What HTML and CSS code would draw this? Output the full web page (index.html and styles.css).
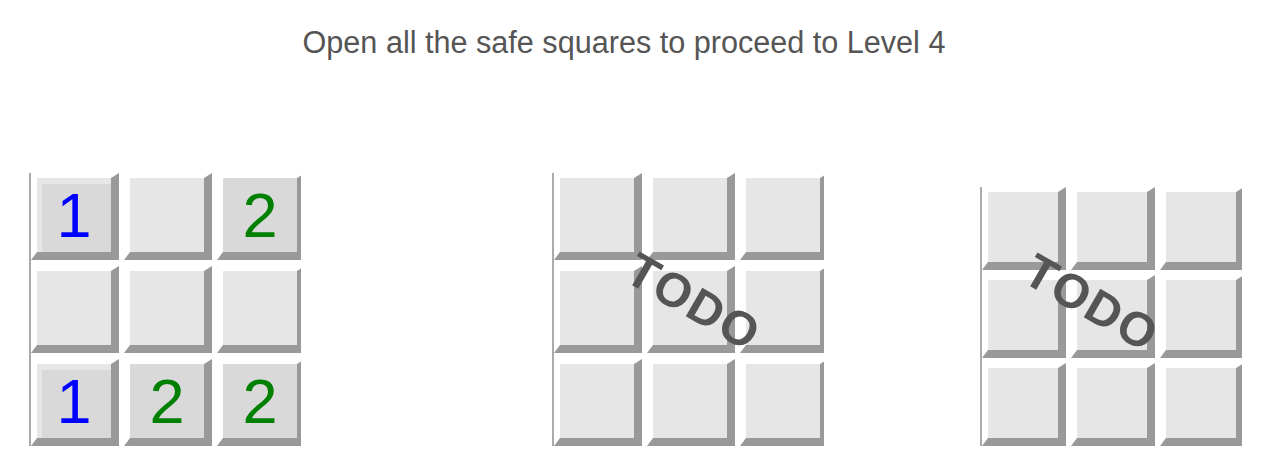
FILE: index.html
```html
<!DOCTYPE html>
<html lang="en">
<head>
<meta charset="utf-8">
<title>Minesweeper levels</title>
<link rel="stylesheet" href="styles.css">
</head>
<body>
<h1 class="title">Open all the safe squares to proceed to Level 4</h1>
<div class="boards">
  <div class="board board-a">
    <div class="grid">
      <div class="cell open one">1</div>
      <div class="cell"></div>
      <div class="cell open two">2</div>
      <div class="cell"></div>
      <div class="cell"></div>
      <div class="cell"></div>
      <div class="cell open one">1</div>
      <div class="cell open two">2</div>
      <div class="cell open two">2</div>
    </div>
  </div>
  <div class="board board-b">
    <div class="grid">
      <div class="cell"></div><div class="cell"></div><div class="cell"></div>
      <div class="cell"></div><div class="cell"></div><div class="cell"></div>
      <div class="cell"></div><div class="cell"></div><div class="cell"></div>
    </div>
    <div class="todo todo-b">TODO</div>
  </div>
  <div class="board board-c">
    <div class="grid">
      <div class="cell"></div><div class="cell"></div><div class="cell"></div>
      <div class="cell"></div><div class="cell"></div><div class="cell"></div>
      <div class="cell"></div><div class="cell"></div><div class="cell"></div>
    </div>
    <div class="todo todo-c">TODO</div>
  </div>
</div>
</body>
</html>
```
FILE: styles.css
```css
html, body {
  background: #fff;
}
body {
  margin: 8px;
  font-family: "Liberation Sans", Arial, sans-serif;
}
.title {
  margin: 0;
  padding: 17px 26px 0 0;
  font-size: 30.6px;
  font-weight: normal;
  line-height: 34px;
  color: #555;
  text-align: center;
}
.boards {
  display: flex;
  align-items: flex-end;
  margin-top: 114px;
}
.board {
  --cw: 88px;
  --ch: 87px;
  --gx: 5px;
  --gy: 6px;
  position: relative;
  flex: none;
  overflow: hidden;
  width: 270px;
  border-left: 2px solid #aaa;
}
.board-a { margin-left: 21px; }
.board-b { margin-left: 251px; }
.board-c {
  --cw: 84px;
  --ch: 83px;
  --gx: 5px;
  --gy: 5px;
  width: 260px;
  margin-left: 156px;
}
.grid {
  display: grid;
  grid-template-columns: repeat(3, var(--cw));
  grid-template-rows: repeat(3, var(--ch));
  column-gap: var(--gx);
  row-gap: var(--gy);
}
.cell {
  box-sizing: border-box;
  border-style: solid;
  border-width: 5px 8px 8px 6px;
  border-color: #fff #999 #999 #fff;
  background: #e6e6e6;
  display: flex;
  align-items: center;
  justify-content: center;
  font-size: 63px;
  line-height: 1;
}
.open {
  background: #d9d9d9;
}
.one {
  color: #0000ff;
  box-shadow: inset 5px 6px 0 #e6e6e6;
}
.two {
  color: #008000;
}
.todo {
  position: absolute;
  transform: translate(-50%, -50%) rotate(30deg);
  font-size: 48px;
  font-weight: bold;
  letter-spacing: 2px;
  color: #555;
  white-space: nowrap;
}
.todo-b { left: 140px; top: 129px; }
.todo-c { left: 110px; top: 116px; }
```
